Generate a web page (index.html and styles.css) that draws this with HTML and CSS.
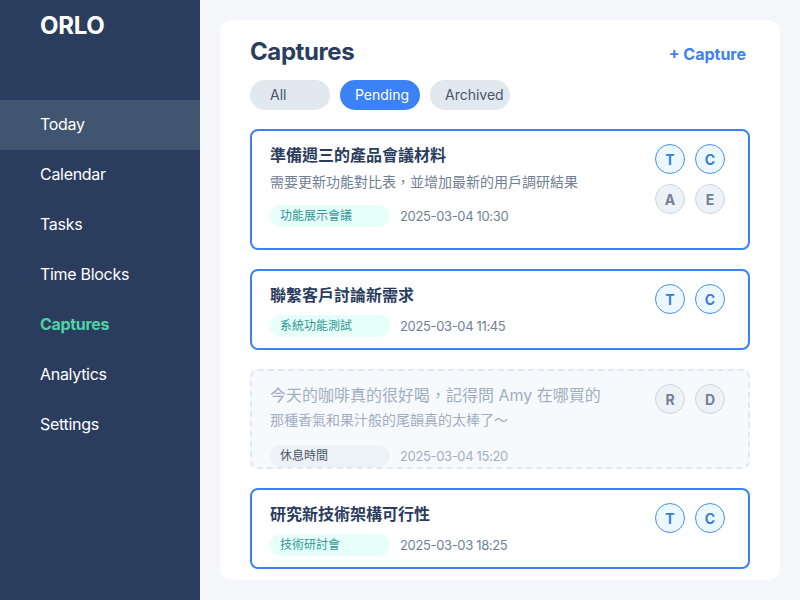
FILE: index.html
```html
<!DOCTYPE html>
<html lang="zh-Hant">
<head>
<meta charset="utf-8">
<title>ORLO Captures</title>
<link rel="stylesheet" href="styles.css">
</head>
<body>
<div class="app">
  <aside class="sidebar">
    <div class="logo">ORLO</div>
    <nav class="nav">
      <a class="nav-item active">Today</a>
      <a class="nav-item">Calendar</a>
      <a class="nav-item">Tasks</a>
      <a class="nav-item">Time Blocks</a>
      <a class="nav-item current">Captures</a>
      <a class="nav-item">Analytics</a>
      <a class="nav-item">Settings</a>
    </nav>
  </aside>
  <main class="main">
    <section class="panel">
      <header class="panel-head">
        <h1 class="title">Captures</h1>
        <button class="add-btn">+ Capture</button>
      </header>
      <div class="tabs">
        <span class="tab tab-all">All</span>
        <span class="tab selected">Pending</span>
        <span class="tab">Archived</span>
      </div>
      <div class="list">
        <article class="card card-tall">
          <div class="card-body">
            <div class="card-title">準備週三的產品會議材料</div>
            <div class="card-desc">需要更新功能對比表，並增加最新的用戶調研結果</div>
            <div class="meta meta-after-desc">
              <span class="tag">功能展示會議</span>
              <span class="date">2025-03-04 10:30</span>
            </div>
          </div>
          <div class="avatars">
            <span class="av av-blue">T</span>
            <span class="av av-blue">C</span>
            <span class="av av-grey">A</span>
            <span class="av av-grey">E</span>
          </div>
        </article>
        <article class="card">
          <div class="card-body">
            <div class="card-title">聯繫客戶討論新需求</div>
            <div class="meta">
              <span class="tag">系統功能測試</span>
              <span class="date">2025-03-04 11:45</span>
            </div>
          </div>
          <div class="avatars">
            <span class="av av-blue">T</span>
            <span class="av av-blue">C</span>
          </div>
        </article>
        <article class="card card-muted">
          <div class="card-body">
            <div class="card-title">今天的咖啡真的很好喝，記得問 Amy 在哪買的</div>
            <div class="card-desc">那種香氣和果汁般的尾韻真的太棒了～</div>
            <div class="meta meta-muted">
              <span class="tag">休息時間</span>
              <span class="date">2025-03-04 15:20</span>
            </div>
          </div>
          <div class="avatars">
            <span class="av av-grey">R</span>
            <span class="av av-grey">D</span>
          </div>
        </article>
        <article class="card">
          <div class="card-body">
            <div class="card-title">研究新技術架構可行性</div>
            <div class="meta">
              <span class="tag">技術研討會</span>
              <span class="date">2025-03-03 18:25</span>
            </div>
          </div>
          <div class="avatars">
            <span class="av av-blue">T</span>
            <span class="av av-blue">C</span>
          </div>
        </article>
      </div>
    </section>
  </main>
</div>
</body>
</html>
```
FILE: styles.css
```css
* { box-sizing: border-box; }
html, body { margin: 0; padding: 0; }
body {
  font-family: Inter, "Noto Sans CJK TC", "Noto Sans", sans-serif;
  background: #f4f6fa;
  width: 800px;
  height: 600px;
  overflow: hidden;
}
.app { display: flex; height: 600px; }
.sidebar {
  width: 200px;
  flex: none;
  background: #2b3d5e;
  color: #fff;
}
.logo {
  font-size: 24px;
  font-weight: 700;
  line-height: 28px;
  padding: 12px 40px 0;
  height: 100px;
  letter-spacing: -0.3px;
}
.nav { display: flex; flex-direction: column; }
.nav-item {
  display: block;
  height: 50px;
  line-height: 48px;
  padding: 0 40px;
  font-size: 16px;
  letter-spacing: -0.3px;
  color: #ffffff;
}
.nav-item.active { background: #405570; }
.nav-item.current { color: #4fd1a5; font-weight: 700; }

.main { flex: 1; padding: 20px; }
.panel {
  background: #fff;
  border-radius: 12px;
  height: 560px;
  padding: 20px 30px;
  overflow: hidden;
}
.panel-head {
  display: flex;
  justify-content: space-between;
  align-items: center;
  height: 24px;
}
.title {
  margin: 0;
  font-size: 24px;
  line-height: 24px;
  font-weight: 700;
  letter-spacing: -0.4px;
  color: #2b3d5e;
}
.add-btn {
  font-family: inherit;
  background: none;
  border: none;
  padding: 0 4px;
  font-size: 16px;
  font-weight: 700;
  color: #3b82f6;
  margin-top: 4px;
}
.tabs { display: flex; gap: 10px; margin-top: 16px; }
.tab {
  width: 80px;
  height: 30px;
  line-height: 30px;
  border-radius: 15px;
  background: #e2e8f0;
  color: #4a5568;
  font-size: 14px;
  padding-left: 15px;
}
.tab-all { padding-left: 20px; }
.tab.selected { background: #3b82f6; color: #fff; }

.list { display: flex; flex-direction: column; gap: 19px; margin-top: 19px; }
.card {
  display: flex;
  justify-content: space-between;
  align-items: flex-start;
  border: 2px solid #3b82f6;
  border-radius: 8px;
  background: #fff;
  padding: 13px 23px 11px 18px;
}
.card-tall { padding-bottom: 21px; }
.card-title {
  font-size: 16px;
  line-height: 22px;
  font-weight: 700;
  color: #2b3d5e;
}
.card-desc {
  margin-top: 6px;
  font-size: 14px;
  line-height: 20px;
  color: #718096;
}
.meta { display: flex; align-items: center; gap: 10px; margin-top: 9px; }
.meta-after-desc { margin-top: 13px; }
.tag {
  width: 120px;
  height: 22px;
  line-height: 22px;
  border-radius: 11px;
  background: #e6fffa;
  color: #319795;
  font-size: 12px;
  padding: 0 10px;
}
.date { font-size: 13px; letter-spacing: -0.35px; color: #718096; }

.card-muted {
  background: #f7fafc;
  border: 2px dashed #e2e8f0;
  padding-bottom: 0;
}
.card-muted .card-title { font-weight: 400; color: #a0aec0; }
.card-muted .card-desc { margin-top: 4px; color: #a0aec0; }
.meta-muted { margin-top: 15px; }
.card-muted .tag { background: #edf2f7; color: #4a5568; }
.card-muted .date { color: #a0aec0; }

.avatars {
  display: grid;
  grid-template-columns: 30px 30px;
  gap: 10px;
  flex: none;
}
.av {
  width: 30px;
  height: 30px;
  border-radius: 50%;
  display: flex;
  align-items: center;
  justify-content: center;
  font-size: 14px;
  font-weight: 700;
}
.av-blue { background: #ebf8ff; border: 1px solid #4a90e2; color: #3b7fd4; }
.av-grey { background: #edf2f7; border: 1px solid #cbd5e0; color: #718096; }
```
